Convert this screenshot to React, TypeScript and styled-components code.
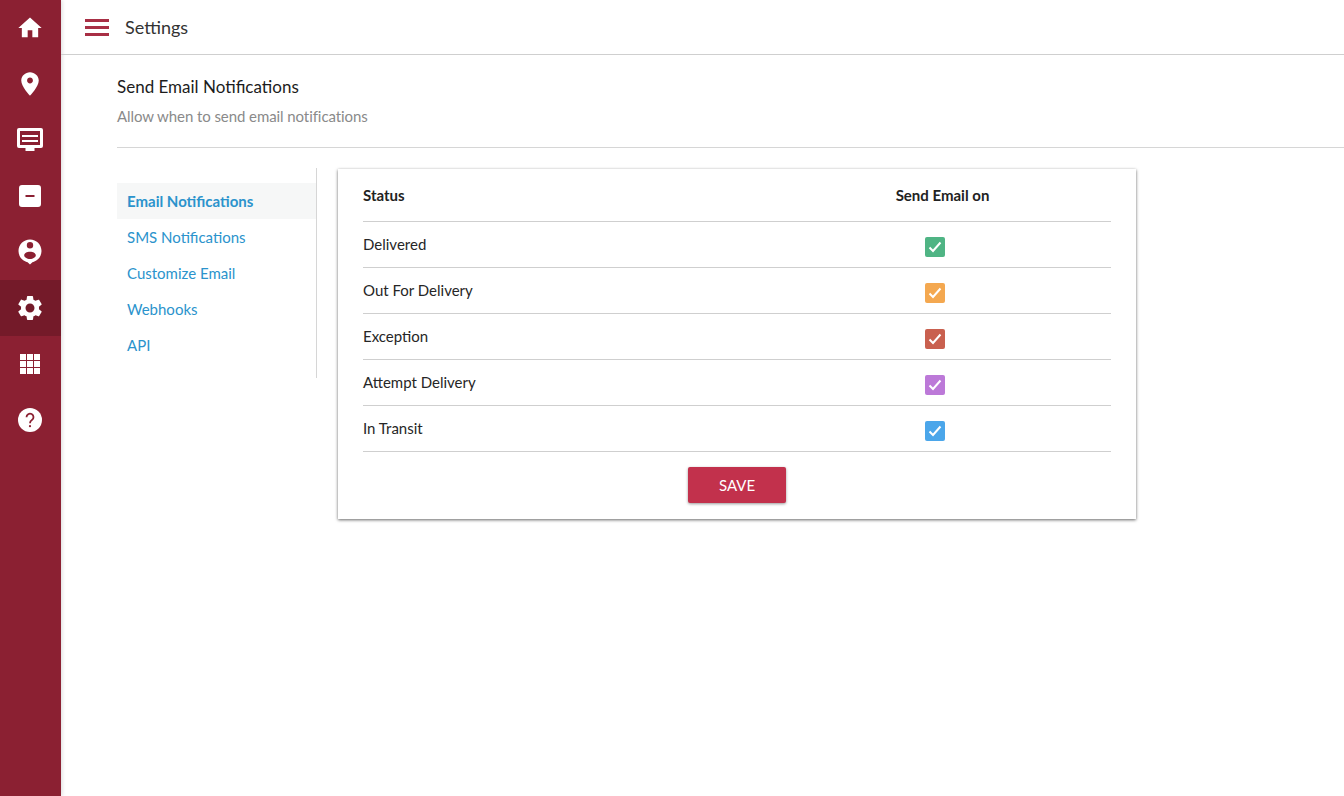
import React from 'react';
import styled, { createGlobalStyle } from 'styled-components';

const GlobalStyle = createGlobalStyle`
  html, body {
    margin: 0;
    padding: 0;
    height: 100%;
    background: #fff;
    font-family: Lato, "Open Sans", sans-serif;
  }
  #root {
    height: 100%;
  }
  * {
    box-sizing: border-box;
  }
`;

const Page = styled.div`
  display: flex;
  height: 796px;
  overflow: hidden;
`;

const Sidebar = styled.nav`
  width: 61px;
  flex-shrink: 0;
  background-color: #8b2032;
  box-shadow: 1px 0 4px rgba(0, 0, 0, 0.15);
`;

const SideItem = styled.div<{ $active?: boolean }>`
  height: 56px;
  padding-right: 1px;
  display: flex;
  align-items: center;
  justify-content: center;
  background-color: ${(p) => (p.$active ? '#741a29' : 'transparent')};
  svg {
    display: block;
    fill: #fff;
  }
`;

const Main = styled.div`
  flex: 1;
  min-width: 0;
`;

const TopBar = styled.header`
  height: 55px;
  display: flex;
  align-items: center;
  gap: 16px;
  padding-left: 24px;
  border-bottom: 1px solid #cfcfcf;
`;

const MenuButton = styled.div`
  width: 24px;
  display: flex;
  flex-direction: column;
  gap: 4px;
  span {
    height: 3px;
    background-color: #a82f45;
  }
`;

const PageTitle = styled.div`
  font-size: 18px;
  color: #333;
`;

const Content = styled.div`
  padding: 21px 0 0 56px;
`;

const SectionTitle = styled.h1`
  margin: 0;
  font-size: 17px;
  line-height: 22px;
  font-weight: 400;
  color: #1c1c1c;
`;

const SectionSub = styled.p`
  margin: 8px 0 0;
  font-size: 15px;
  line-height: 20px;
  letter-spacing: -0.08px;
  color: #8a8a8a;
`;

const Divider = styled.hr`
  margin: 21px 0 20px;
  border: none;
  border-top: 1px solid #d6d6d6;
`;

const Columns = styled.div`
  display: flex;
  align-items: flex-start;
`;

const SideMenu = styled.ul`
  width: 200px;
  height: 210px;
  margin: 0;
  padding: 15px 0 0;
  list-style: none;
  border-right: 1px solid #d6d6d6;
`;

const MenuItem = styled.li<{ $active?: boolean }>`
  height: 36px;
  padding-left: 10px;
  display: flex;
  align-items: center;
  font-size: 15px;
  color: #2b93cc;
  font-weight: ${(p) => (p.$active ? 700 : 400)};
  background-color: ${(p) => (p.$active ? '#f6f7f7' : 'transparent')};
`;

const Card = styled.section`
  width: 798px;
  height: 350px;
  margin: 1px 0 0 21px;
  padding: 0 25px;
  background: #fff;
  box-shadow: 0 1px 3px rgba(0, 0, 0, 0.6);
  display: flex;
  flex-direction: column;
`;

const HeadRow = styled.div`
  height: 53px;
  display: grid;
  grid-template-columns: 411px 337px;
  align-items: center;
  padding-bottom: 1px;
  border-bottom: 1px solid #cfcfcf;
  font-size: 15px;
  font-weight: 700;
  color: #222;
`;

const HeadCell = styled.div<{ $center?: boolean }>`
  text-align: ${(p) => (p.$center ? 'center' : 'left')};
`;

const Row = styled.div`
  height: 46px;
  display: grid;
  grid-template-columns: 411px 337px;
  align-items: center;
  border-bottom: 1px solid #cfcfcf;
  font-size: 15px;
  color: #262626;
`;

const RowLabel = styled.div`
  padding-bottom: 1px;
`;

const CheckCell = styled.div`
  display: flex;
  justify-content: center;
  padding: 5px 15px 0 0;
`;

const CheckBox = styled.div<{ $color: string }>`
  width: 20px;
  height: 20px;
  border-radius: 2px;
  background-color: ${(p) => p.$color};
  display: flex;
  align-items: center;
  justify-content: center;
  svg {
    display: block;
    fill: none;
    stroke: #fff;
    stroke-width: 2;
  }
`;

const Footer = styled.div`
  display: flex;
  justify-content: center;
  padding-top: 15px;
`;

const SaveButton = styled.button`
  width: 98px;
  height: 36px;
  border: none;
  border-radius: 2px;
  background-color: #c2314c;
  color: #fff;
  font-family: inherit;
  font-size: 15px;
  box-shadow: 0 1px 3px rgba(0, 0, 0, 0.4);
`;

const sideIcons = [
  <svg key="home" width="28" height="28" viewBox="0 0 24 24"><path d="M10 20v-6h4v6h5v-8h3L12 3 2 12h3v8z" /></svg>,
  <svg key="pin" width="28" height="28" viewBox="0 0 24 24"><path d="M12 2C8 2 4.500 5.130 4.500 9c0 5.250 7.500 13 7.500 13s7.500-7.750 7.500-13c0-3.870-3.500-7-7.500-7zm0 9.500c-1.380 0-2.500-1.120-2.500-2.500s1.120-2.500 2.500-2.500 2.500 1.120 2.500 2.500-1.120 2.500-2.500 2.500z" /></svg>,
  <svg key="screen" width="28" height="28" viewBox="0 0 28 28"><path fillRule="evenodd" d="M3 2h22a2 2 0 0 1 2 2v16a2 2 0 0 1-2 2h-6.500v3h-9v-3H3a2 2 0 0 1-2-2V4a2 2 0 0 1 2-2zM4 5v14h20V5zM6 9h16v2H6zM6 14h16v2H6z" /></svg>,
  <svg key="minus" width="28" height="28" viewBox="0 0 28 28"><path fillRule="evenodd" d="M6 3h16a3 3 0 0 1 3 3v16a3 3 0 0 1-3 3H6a3 3 0 0 1-3-3V6a3 3 0 0 1 3-3zM9.500 13v2h9v-2z" /></svg>,
  <svg key="person" width="28" height="28" viewBox="0 0 28 28"><path fillRule="evenodd" d="M14 1.500c6.400 0 11.500 5.100 11.500 11.500 0 5.500-3.900 10.100-9.100 11.200L14 26.500l-2.400-2.300C6.400 23.100 2.500 18.500 2.500 13 2.500 6.600 7.600 1.500 14 1.500zM14 4a3.200 3.200 0 1 0 0 6.400A3.200 3.200 0 0 0 14 4zM14 13.700c-3.200 0-5.800 1.600-5.800 3.600s2.600 3.700 5.800 3.700 5.800-1.700 5.800-3.700-2.600-3.600-5.800-3.600z" /></svg>,
  <svg key="gear" width="30" height="30" viewBox="0 0 24 24"><path d="M19.140 12.940c.04-.3.06-.61.06-.94 0-.32-.02-.64-.07-.94l2.030-1.580c.18-.14.23-.41.12-.61l-1.920-3.320c-.12-.22-.37-.29-.59-.22l-2.390.96c-.5-.38-1.030-.7-1.620-.94l-.36-2.540c-.04-.24-.24-.41-.48-.41h-3.840c-.24 0-.43.17-.47.41l-.36 2.540c-.59.24-1.130.57-1.620.94l-2.390-.96c-.22-.08-.47 0-.59.22L2.740 8.870c-.12.21-.08.47.12.61l2.030 1.580c-.05.3-.09.63-.09.94s.02.64.07.94l-2.030 1.580c-.18.14-.23.41-.12.61l1.920 3.320c.12.22.37.29.59.22l2.390-.96c.5.38 1.030.7 1.620.94l.36 2.540c.05.24.24.41.48.41h3.840c.24 0 .44-.17.47-.41l.36-2.540c.59-.24 1.130-.56 1.620-.94l2.390.96c.22.08.47 0 .59-.22l1.920-3.320c.12-.22.07-.47-.12-.61l-2.010-1.580zM12 15.600c-1.980 0-3.600-1.620-3.600-3.600s1.620-3.600 3.600-3.600 3.600 1.620 3.600 3.600-1.620 3.600-3.600 3.600z" /></svg>,
  <svg key="grid" width="20" height="20" viewBox="0 0 20 20"><path d="M0 0h6v6H0zM7 0h6v6H7zM14 0h6v6h-6zM0 7h6v6H0zM7 7h6v6H7zM14 7h6v6h-6zM0 14h6v6H0zM7 14h6v6H7zM14 14h6v6h-6z" /></svg>,
  <svg key="help" width="24" height="24" viewBox="0 0 24 24"><circle cx="12" cy="12" r="12" /><path d="M8.500 9.200a3.500 3.500 0 1 1 5.400 2.900c-1.200.8-1.900 1.500-1.900 3.100" fill="none" stroke="#8b2032" strokeWidth="1.800" /><circle cx="12" cy="18.200" r="1.100" fill="#8b2032" /></svg>,
];

const menuItems = ['Email Notifications', 'SMS Notifications', 'Customize Email', 'Webhooks', 'API'];

const statuses = [
  { label: 'Delivered', color: '#4fb484' },
  { label: 'Out For Delivery', color: '#f4a850' },
  { label: 'Exception', color: '#c9604f' },
  { label: 'Attempt Delivery', color: '#bc79d8' },
  { label: 'In Transit', color: '#4ba6ea' },
];

const App: React.FC = () => {
  return (
    <Page>
      <GlobalStyle />
      <Sidebar>
        {sideIcons.map((icon, index) => (
          <SideItem key={index} $active={index === 5}>
            {icon}
          </SideItem>
        ))}
      </Sidebar>
      <Main>
        <TopBar>
          <MenuButton>
            <span />
            <span />
            <span />
          </MenuButton>
          <PageTitle>Settings</PageTitle>
        </TopBar>
        <Content>
          <SectionTitle>Send Email Notifications</SectionTitle>
          <SectionSub>Allow when to send email notifications</SectionSub>
          <Divider />
          <Columns>
            <SideMenu>
              {menuItems.map((item, index) => (
                <MenuItem key={item} $active={index === 0}>
                  {item}
                </MenuItem>
              ))}
            </SideMenu>
            <Card>
              <HeadRow>
                <HeadCell>Status</HeadCell>
                <HeadCell $center>Send Email on</HeadCell>
              </HeadRow>
              {statuses.map((status) => (
                <Row key={status.label}>
                  <RowLabel>{status.label}</RowLabel>
                  <CheckCell>
                    <CheckBox $color={status.color}>
                      <svg width="14" height="12" viewBox="0 0 14 12">
                        <path d="M1.500 6.500 5 10l7.500-8.500" />
                      </svg>
                    </CheckBox>
                  </CheckCell>
                </Row>
              ))}
              <Footer>
                <SaveButton>SAVE</SaveButton>
              </Footer>
            </Card>
          </Columns>
        </Content>
      </Main>
    </Page>
  );
};

export default App;
